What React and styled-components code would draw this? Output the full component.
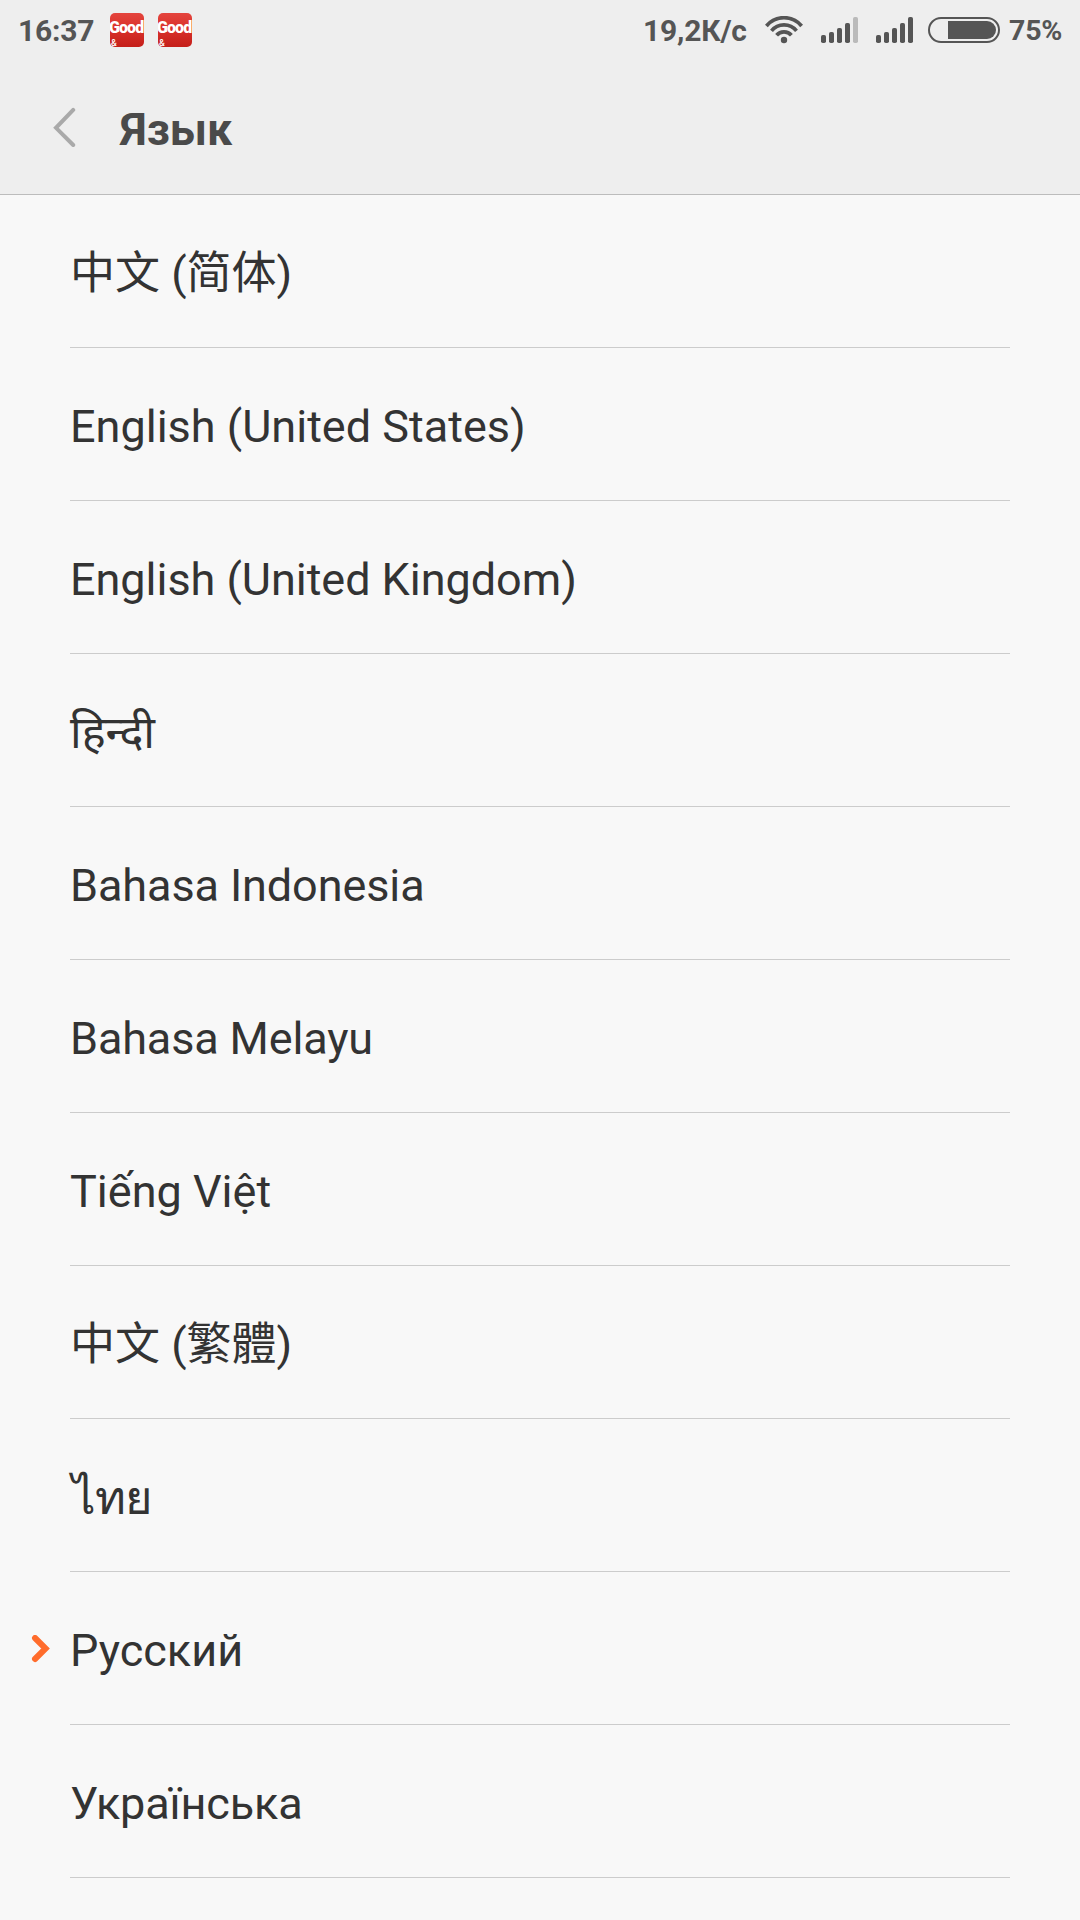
import React from 'react';
import styled, { createGlobalStyle } from 'styled-components';

const GlobalStyle = createGlobalStyle`
  * { box-sizing: border-box; }
  body {
    margin: 0;
    background: #f8f8f8;
    font-family: Roboto, "Noto Sans", "Noto Sans CJK SC", sans-serif;
  }
`;

const Screen = styled.div`
  width: 1080px;
  height: 1920px;
  overflow: hidden;
  background: #f8f8f8;
`;

const Header = styled.header`
  height: 195px;
  background: #eee;
  border-bottom: 1px solid #bcbcbc;
`;

const StatusBar = styled.div`
  height: 60px;
  padding: 0 19px 0 18px;
  display: flex;
  align-items: center;
  justify-content: space-between;
  color: #555;
`;

const Group = styled.div`
  display: flex;
  align-items: center;
`;

const StatusText = styled.span`
  font-size: ${(p) => p.$size || 30}px;
  font-weight: 700;
  line-height: 60px;
  height: 60px;
  padding-top: 1px;
  width: ${(p) => p.$width}px;
  letter-spacing: -0.2px;
  white-space: nowrap;
`;

const AppBadge = styled.div`
  width: 34px;
  height: 34px;
  margin-right: 14px;
  border-radius: 5px;
  overflow: hidden;
  background: linear-gradient(#e4443d, #d8302a 50%, #c41e19);
  color: #fff;
  display: flex;
  flex-direction: column;
`;

const BadgeWord = styled.span`
  height: 25px;
  line-height: 29px;
  margin-left: -1px;
  font-size: 16px;
  font-weight: 900;
  letter-spacing: -0.9px;
  white-space: nowrap;
`;

const BadgeSmall = styled.span`
  padding-left: 1px;
  font-size: 9px;
  line-height: 11px;
  font-weight: 500;
`;

const Icon = styled.svg`
  display: block;
  flex: none;
  margin-right: ${(p) => p.$gap || 0}px;
`;

const TitleBar = styled.div`
  height: 134px;
  padding: 0 0 0 53px;
  display: flex;
  align-items: center;
`;

const Title = styled.h1`
  margin: 0 0 0 43px;
  padding-top: 3px;
  font-size: 45px;
  line-height: 134px;
  height: 134px;
  font-weight: 700;
  color: #4a4a4a;
`;

const Row = styled.li`
  display: flex;
  height: 153px;
`;

const Marker = styled.div`
  width: 70px;
  height: 153px;
  padding: 63px 0 0 31px;
`;

const Label = styled.div`
  width: 940px;
  height: 153px;
  padding: 3px 0 0 ${(p) => p.$indent || 0}px;
  border-bottom: 1px solid #ccc;
  line-height: 152px;
  font-size: ${(p) => p.$size || 45}px;
  letter-spacing: ${(p) => p.$tracking || 0}px;
  color: #333;
  white-space: nowrap;
`;

const List = styled.ul`
  margin: 0;
  padding: 0;
  list-style: none;
`;

const languages = [
  { name: '中文 (简体)', lang: 'zh-CN' },
  { name: 'English (United States)', lang: 'en' },
  { name: 'English (United Kingdom)', lang: 'en', tracking: -0.04 },
  { name: 'हिन्दी', lang: 'hi' },
  { name: 'Bahasa Indonesia', lang: 'id', tracking: -0.1 },
  { name: 'Bahasa Melayu', lang: 'ms', tracking: -0.15 },
  { name: 'Tiếng Việt', lang: 'vi' },
  { name: '中文 (繁體)', lang: 'zh-TW' },
  { name: 'ไทย', lang: 'th', indent: 2, size: 47, tracking: -1 },
  { name: 'Русский', lang: 'ru', selected: true },
  { name: 'Українська', lang: 'uk', tracking: -0.15 },
];

const barHeights = [8, 11, 15, 20, 26];

function Signal({ weak, gap }) {
  return (
    <Icon width="37" height="26" viewBox="0 0 37 26" $gap={gap}>
      {barHeights.map((h, i) => (
        <rect
          key={h}
          x={i * 8}
          y={26 - h}
          width="5"
          height={h}
          rx="1.8"
          fill={weak && i === 4 ? '#bababa' : '#555'}
        />
      ))}
    </Icon>
  );
}

function Wifi() {
  return (
    <Icon width="40" height="28" viewBox="0 0 40 28" $gap={16}>
      <g fill="none" stroke="#555" strokeWidth="3.7">
        <path d="M1.4 10 A22.8 22.8 0 0 1 36.6 10" />
        <path d="M6.5 14.8 A16 16 0 0 1 31.5 14.8" />
        <path d="M11.6 19.3 A9.6 9.6 0 0 1 26.4 19.3" />
      </g>
      <circle cx="19" cy="24" r="3.2" fill="#555" />
    </Icon>
  );
}

function Battery() {
  return (
    <Icon width="72" height="26" viewBox="0 0 72 26" $gap={9}>
      <rect x="1" y="1" width="70" height="24" rx="12" fill="none" stroke="#555" strokeWidth="2" />
      <path d="M20 4 H59 A9 9 0 0 1 59 22 H20 Z" fill="#555" />
    </Icon>
  );
}

function NotificationBadge() {
  return (
    <AppBadge>
      <BadgeWord>Good</BadgeWord>
      <BadgeSmall>&amp;</BadgeSmall>
    </AppBadge>
  );
}

export default function App() {
  return (
    <>
      <GlobalStyle />
      <Screen>
        <Header>
          <StatusBar>
            <Group>
              <StatusText $width={92}>16:37</StatusText>
              <NotificationBadge />
              <NotificationBadge />
            </Group>
            <Group>
              <StatusText $width={122}>19,2К/с</StatusText>
              <Wifi />
              <Signal weak gap={18} />
              <Signal gap={15} />
              <Battery />
              <StatusText $size={28.5} $width={52}>75%</StatusText>
            </Group>
          </StatusBar>
          <TitleBar>
            <Icon width="24" height="40" viewBox="0 0 24 40">
              <path d="M20.2 2.9 L3 20.8 L20.2 38" fill="none" stroke="#a9a9a9" strokeWidth="4" strokeLinecap="round" />
            </Icon>
            <Title>Язык</Title>
          </TitleBar>
        </Header>
        <List>
          {languages.map((l) => (
            <Row key={l.name}>
              <Marker>
                {l.selected && (
                  <Icon width="20" height="28" viewBox="0 0 20 28">
                    <path d="M4 3 L14.6 13.5 L4 24" fill="none" stroke="#ff6c2c" strokeWidth="6" strokeLinecap="round" />
                  </Icon>
                )}
              </Marker>
              <Label lang={l.lang} $indent={l.indent} $size={l.size} $tracking={l.tracking}>{l.name}</Label>
            </Row>
          ))}
        </List>
      </Screen>
    </>
  );
}
